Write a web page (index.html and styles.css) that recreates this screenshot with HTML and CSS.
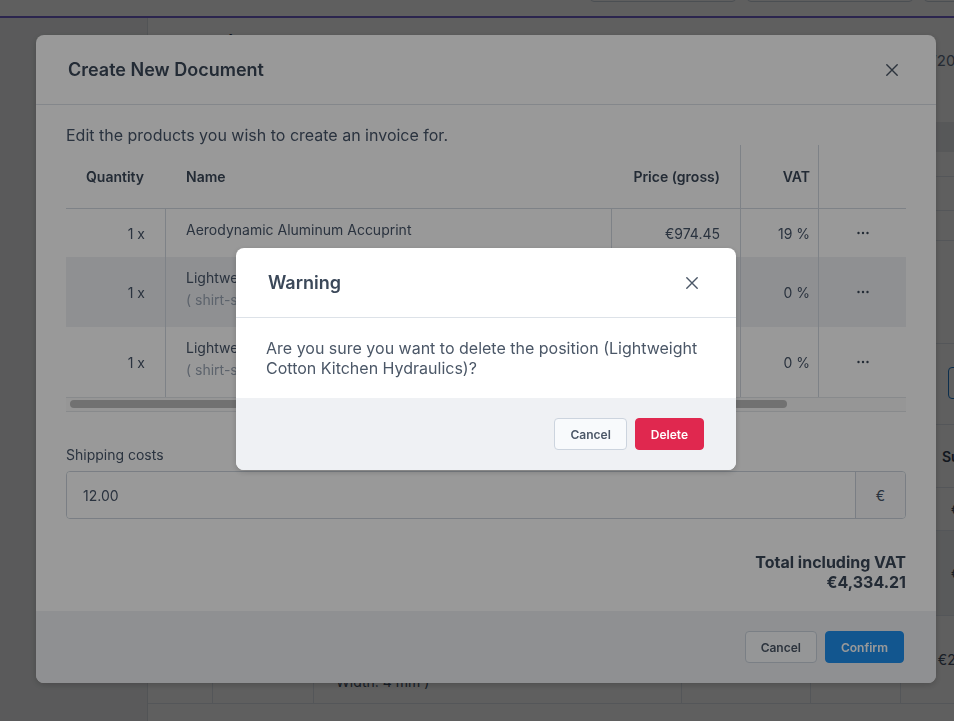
FILE: index.html
```html
<!DOCTYPE html>
<html lang="en">
<head>
<meta charset="utf-8">
<title>Create New Document</title>
<link rel="stylesheet" href="styles.css">
</head>
<body>
<div class="page">
  <header class="topbar">
    <span class="tb-btn tb-1"></span>
    <span class="tb-btn tb-2"></span>
    <span class="tb-btn tb-3"></span>
  </header>
  <div class="layout">
    <aside class="sidebar"></aside>
    <main class="content">
      <h1 class="doc-title">1004 (1 product - Cube Shelves) (product - Cube Shelves)</h1>
      <div class="doc-meta"><span class="doc-date">12/01/2020</span></div>
      <div class="info">
        <div class="info-head"></div>
        <div class="info-row r1"></div>
        <div class="info-row r2"></div>
        <div class="info-row r3"></div>
      </div>
      <div class="section"></div>
      <div class="toolbar"><span class="outline-btn">Add position</span></div>
      <div class="positions">
        <div class="pos-row pos-head">
          <div class="pc"></div>
          <div class="pc">Pos.</div>
          <div class="pc">Name</div>
          <div class="pc">Quantity</div>
          <div class="pc">Price</div>
          <div class="pc pc-sum">Sum</div>
        </div>
        <div class="pos-row pos-r1">
          <div class="pc"></div><div class="pc">1</div><div class="pc">Aerodynamic Aluminum Accuprint</div><div class="pc">1 x</div><div class="pc">€974.45</div><div class="pc pc-sum">€974.45</div>
        </div>
        <div class="pos-row pos-r2">
          <div class="pc"></div><div class="pc">2</div><div class="pc">Lightweight Cotton Kitchen Hydraulics</div><div class="pc">1 x</div><div class="pc">€974.45</div><div class="pc pc-sum">€974.45</div>
        </div>
        <div class="pos-row pos-r3">
          <div class="pc"></div><div class="pc">3</div><div class="pc pc-name">Lightweight Cotton Kitchen Hydraulics<br>( shirt-size: L,<br>Width: 4 mm )</div><div class="pc">1 x</div><div class="pc">€2,923.35</div><div class="pc pc-sum">€2,923.35</div>
        </div>
        <div class="pos-foot"></div>
      </div>
    </main>
  </div>
</div>

<div class="overlay overlay-dim">
  <div class="modal modal-lg">
    <div class="modal-header">
      <h2 class="modal-title">Create New Document</h2>
      <button class="close-btn" type="button" aria-label="Close">
        <svg width="12" height="12" viewBox="0 0 12 12"><path d="M0.8 0.8L11.2 11.2M11.2 0.8L0.8 11.2" stroke="currentColor" stroke-width="1.4" stroke-linecap="round"/></svg>
      </button>
    </div>
    <div class="modal-body">
      <p class="intro">Edit the products you wish to create an invoice for.</p>
      <div class="items">
        <div class="items-row items-head">
          <div class="c c-qty">Quantity</div>
          <div class="c c-name">Name</div>
          <div class="c c-price">Price (gross)</div>
          <div class="c c-vat">VAT</div>
          <div class="c c-act"></div>
        </div>
        <div class="items-row">
          <div class="c c-qty">1 x</div>
          <div class="c c-name">Aerodynamic Aluminum Accuprint</div>
          <div class="c c-price">€974.45</div>
          <div class="c c-vat">19 %</div>
          <div class="c c-act"><svg width="12" height="4" viewBox="0 0 12 4"><circle cx="1.5" cy="2" r="1.2"/><circle cx="6" cy="2" r="1.2"/><circle cx="10.5" cy="2" r="1.2"/></svg></div>
        </div>
        <div class="items-row is-active">
          <div class="c c-qty">1 x</div>
          <div class="c c-name">Lightweight Cotton Kitchen Hydraulics<span class="variant">( shirt-size: L )</span></div>
          <div class="c c-price">€1,673.88</div>
          <div class="c c-vat">0 %</div>
          <div class="c c-act"><svg width="12" height="4" viewBox="0 0 12 4"><circle cx="1.5" cy="2" r="1.2"/><circle cx="6" cy="2" r="1.2"/><circle cx="10.5" cy="2" r="1.2"/></svg></div>
        </div>
        <div class="items-row">
          <div class="c c-qty">1 x</div>
          <div class="c c-name">Lightweight Cotton Kitchen Hydraulics<span class="variant">( shirt-size: XL )</span></div>
          <div class="c c-price">€1,673.88</div>
          <div class="c c-vat">0 %</div>
          <div class="c c-act"><svg width="12" height="4" viewBox="0 0 12 4"><circle cx="1.5" cy="2" r="1.2"/><circle cx="6" cy="2" r="1.2"/><circle cx="10.5" cy="2" r="1.2"/></svg></div>
        </div>
        <div class="hscroll"><div class="hscroll-thumb"></div></div>
      </div>

      <label class="field-label" for="shipping">Shipping costs</label>
      <div class="input-group">
        <input id="shipping" class="input" type="text" value="12.00">
        <span class="addon">€</span>
      </div>

      <div class="total">
        <div>Total including VAT</div>
        <div>€4,334.21</div>
      </div>
    </div>
    <div class="modal-footer">
      <button class="btn btn-default" type="button">Cancel</button>
      <button class="btn btn-primary" type="button">Confirm</button>
    </div>
  </div>
</div>

<div class="overlay overlay-top">
  <div class="modal modal-sm">
    <div class="modal-header">
      <h2 class="modal-title">Warning</h2>
      <button class="close-btn" type="button" aria-label="Close">
        <svg width="12" height="12" viewBox="0 0 12 12"><path d="M0.8 0.8L11.2 11.2M11.2 0.8L0.8 11.2" stroke="currentColor" stroke-width="1.4" stroke-linecap="round"/></svg>
      </button>
    </div>
    <div class="modal-body modal-body-sm">
      <p class="message">Are you sure you want to delete the position (Lightweight Cotton Kitchen Hydraulics)?</p>
    </div>
    <div class="modal-footer">
      <button class="btn btn-default" type="button">Cancel</button>
      <button class="btn btn-danger" type="button">Delete</button>
    </div>
  </div>
</div>
</body>
</html>
```

FILE: styles.css
```css
* { box-sizing: border-box; }
html, body { margin: 0; height: 100%; }
body {
  font-family: Inter, "Noto Sans", "Liberation Sans", sans-serif;
  color: #334155;
  background: #ffffff;
  overflow: hidden;
}

/* ---------- background page ---------- */
.page { height: 100%; display: flex; flex-direction: column; }
.topbar {
  height: 18px;
  flex: none;
  border-bottom: 2px solid #7466d4;
  display: flex;
  justify-content: flex-end;
  gap: 11px;
  overflow: hidden;
}
.tb-btn {
  height: 32px;
  margin-top: -30px;
  border: 1px solid #cbd5e1;
  border-radius: 4px;
  background: #fff;
  flex: none;
}
.tb-1 { width: 146px; }
.tb-2 { width: 166px; }
.tb-3 { width: 60px; margin-right: -30px; }

.layout { flex: 1; display: flex; min-height: 0; }
.sidebar {
  width: 148px;
  flex: none;
  background: #f2f3f5;
  border-right: 1px solid #dde2e8;
}
.content { flex: 1; min-width: 0; overflow: hidden; }
.doc-title {
  margin: 14px 30px 0;
  font-size: 18px;
  line-height: 22px;
  font-weight: 600;
  white-space: nowrap;
  color: #334155;
}
.doc-meta {
  height: 20px;
  margin-top: -3px;
  display: flex;
  justify-content: flex-end;
  font-size: 15px;
  line-height: 20px;
  color: #64748b;
}
.doc-date { margin-right: -20px; }
.info { margin-top: 51px; }
.info-head { height: 30px; background: #eceef1; }
.info-row { border-bottom: 1px solid #e2e8f0; }
.info-row.r1 { height: 25px; }
.info-row.r2 { height: 34px; }
.info-row.r3 { height: 30px; }
.section { height: 103px; border-bottom: 1px solid #e2e8f0; }
.toolbar {
  height: 81px;
  padding-top: 23px;
  display: flex;
  justify-content: flex-end;
  border-bottom: 1px solid #e2e8f0;
}
.outline-btn {
  height: 32px;
  width: 120px;
  margin-right: -114px;
  border: 1px solid #1f7fd0;
  border-radius: 4px;
  font-size: 13px;
  line-height: 30px;
  padding-left: 12px;
  color: #1f7fd0;
  white-space: nowrap;
  overflow: hidden;
}
.positions { width: 874px; }
.pos-row {
  display: grid;
  grid-template-columns: 65px 101px 368px 129px 90px 121px;
  border-bottom: 1px solid #e2e8f0;
  font-size: 14px;
  color: #475569;
}
.pos-row .pc {
  border-right: 1px solid #e2e8f0;
  padding: 0 20px;
  display: flex;
  align-items: center;
  white-space: nowrap;
}
.pos-row .pc-sum { border-right: 0; justify-content: flex-end; padding-right: 16px; }
.pos-head { height: 63px; font-weight: 600; color: #334155; }
.pos-head .pc { border-right: 0; }
.pos-head .pc-sum { justify-content: flex-start; padding-left: 41px; }
.pos-r1 { height: 43px; }
.pos-r2 { height: 85px; background: #f1f3f5; }
.pos-r3 { height: 88px; }
.pos-r3 .pc-name { align-items: flex-start; padding: 11px 22px 0; line-height: 22px; }
.pos-foot { height: 40px; }

/* ---------- overlays & modals ---------- */
.overlay {
  position: fixed;
  inset: 0;
  display: flex;
  justify-content: center;
  padding-left: 18px;
}
.overlay-dim { background: rgba(0, 0, 0, 0.38); align-items: flex-start; padding-top: 35px; }
.overlay-top { background: rgba(0, 0, 0, 0.4); align-items: center; padding-bottom: 3px; }

.modal {
  background: #fff;
  border-radius: 8px;
  overflow: hidden;
  box-shadow: 0 2px 6px rgba(0, 0, 0, 0.18);
}
.modal-lg { width: 900px; }
.modal-sm { width: 500px; }

.modal-header {
  height: 70px;
  padding: 0 32px;
  display: flex;
  align-items: center;
  justify-content: space-between;
  border-bottom: 1px solid #dde2e8;
}
.modal-title {
  margin: 0;
  font-size: 18px;
  font-weight: 600;
  color: #3b4859;
}
.close-btn {
  width: 24px;
  height: 24px;
  padding: 0;
  border: 0;
  background: none;
  color: #4b5767;
  display: flex;
  align-items: center;
  justify-content: center;
}

.modal-body { padding: 20px 30px 19px; }
.intro {
  margin: 0;
  font-size: 16px;
  line-height: 20px;
  color: #475569;
}

.items { font-size: 14px; color: #475569; }
.items-row {
  display: grid;
  grid-template-columns: 100px 446px 129px 78px 87px;
}
.items-row .c {
  display: flex;
  align-items: center;
  padding: 0 20px;
  white-space: nowrap;
  overflow: hidden;
}
.items-row .c-qty { justify-content: flex-end; border-right: 1px solid #d3d9e1; }
.items-row .c-name {
  flex-direction: column;
  align-items: flex-start;
  padding: 10px 20px 16px;
  line-height: 22px;
  border-right: 1px solid #d3d9e1;
}
.items-row .c-price { justify-content: flex-end; border-right: 1px solid #d3d9e1; }
.items-row .c-vat { justify-content: flex-end; padding-right: 8px; border-right: 1px solid #d3d9e1; }
.items-row .c-act { justify-content: center; padding: 0; fill: #3b4859; }
.variant { color: #9aa5b4; }
.items-row.is-active { background: #eef0f3; }

.items-head {
  height: 64px;
  border-bottom: 1px solid #d3d9e1;
  font-weight: 600;
  color: #3b4859;
}
.items-head .c-qty { justify-content: flex-start; border-right: 0; }
.items-head .c-name { border-right: 0; padding: 0 20px; justify-content: center; }

.hscroll {
  height: 15px;
  border-top: 1px solid #e3e6ea;
  border-bottom: 1px solid #e3e6ea;
  padding: 2px 4px;
  background: #fafafa;
}
.hscroll-thumb {
  width: 717px;
  height: 8px;
  border-radius: 4px;
  background: #bcbcbc;
}

.field-label {
  display: block;
  margin-top: 33px;
  font-size: 14px;
  line-height: 20px;
  color: #475569;
}
.input-group {
  margin-top: 6px;
  height: 48px;
  display: flex;
  border: 1px solid #cbd3dc;
  border-radius: 4px;
  overflow: hidden;
}
.input {
  flex: 1;
  min-width: 0;
  border: 0;
  padding: 0 16px;
  font: inherit;
  font-size: 14px;
  color: #475569;
  background: #fff;
  outline: none;
}
.addon {
  width: 50px;
  flex: none;
  border-left: 1px solid #cbd3dc;
  background: #f8f9fa;
  display: flex;
  align-items: center;
  justify-content: center;
  font-size: 14px;
  color: #475569;
}

.total {
  margin-top: 33px;
  text-align: right;
  font-size: 16px;
  line-height: 20px;
  font-weight: 700;
  color: #3b4859;
}

.modal-footer {
  height: 72px;
  padding: 0 32px;
  display: flex;
  align-items: center;
  justify-content: flex-end;
  gap: 8px;
  background: #eff1f4;
}
.btn {
  height: 32px;
  padding: 0 15px;
  border-radius: 4px;
  font-family: inherit;
  font-size: 12px;
  font-weight: 600;
  border: 1px solid transparent;
  cursor: pointer;
}
.btn-default { background: #f8fafc; border-color: #ccd4de; color: #4b5767; }
.btn-primary { background: #1f90ee; border-color: #1f90ee; color: #fff; }
.btn-danger { background: #e0284f; border-color: #e0284f; color: #fff; }

.modal-body-sm { padding: 20px 30px; }
.message {
  margin: 0;
  font-size: 16px;
  line-height: 20px;
  color: #4b5767;
}
```
